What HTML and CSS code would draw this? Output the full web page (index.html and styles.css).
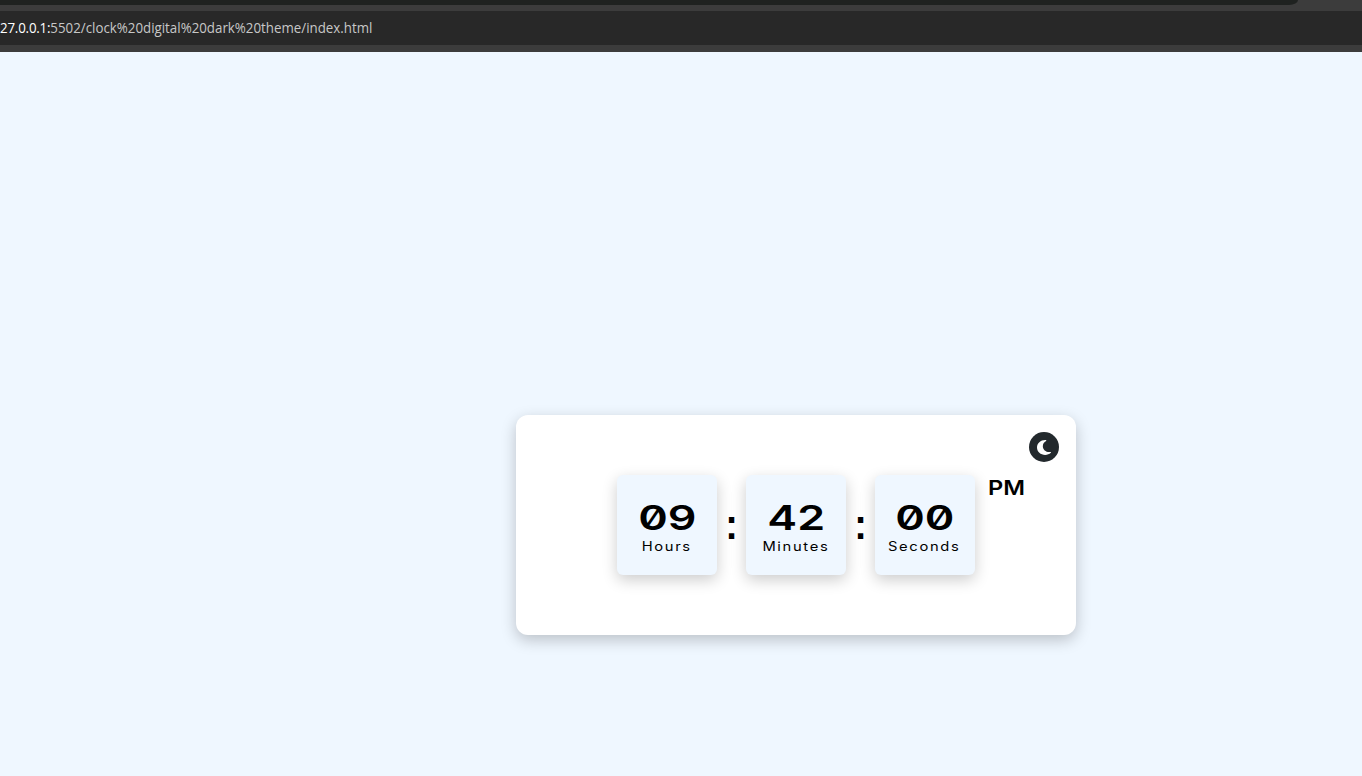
FILE: index.html
```html
<!DOCTYPE html>
<html lang="en">
<head>
<meta charset="utf-8">
<title>Digital Clock</title>
<link rel="stylesheet" href="styles.css">
</head>
<body>
<header class="browser">
  <div class="tabs"></div>
  <div class="address"><span class="url"><span class="host">27.0.0.1:</span>5502/clock%20digital%20dark%20theme/index.html</span></div>
</header>
<main class="page">
  <section class="card">
    <div class="clock">
      <div class="tile"><span class="num">09</span><span class="label">Hours</span></div>
      <span class="colon">:</span>
      <div class="tile"><span class="num">42</span><span class="label">Minutes</span></div>
      <span class="colon">:</span>
      <div class="tile"><span class="num">00</span><span class="label">Seconds</span></div>
      <span class="ampm">PM</span>
    </div>
    <button class="toggle" aria-label="Dark mode">
      <svg width="14" height="17" viewBox="0 0 384 512" preserveAspectRatio="none"><path fill="#fff" d="M223.500 32C100 32 0 132.300 0 256S100 480 223.500 480c60.600 0 115.500-24.200 155.800-63.400c5-4.900 6.300-12.500 3.100-18.700s-10.100-9.700-17-8.500c-9.800 1.700-19.800 2.600-30.100 2.600c-96.900 0-175.500-78.800-175.500-176c0-65.800 36-123.100 89.300-153.300c6.100-3.500 9.200-10.500 7.700-17.300s-7.300-11.900-14.300-12.500c-6.300-.5-12.600-.8-19-.8z"/></svg>
    </button>
  </section>
</main>
</body>
</html>
```
FILE: styles.css
```css
* { margin: 0; padding: 0; box-sizing: border-box; }
body { width: 1362px; height: 776px; overflow: hidden; background: #eff7ff; font-family: Inter, "DejaVu Sans", sans-serif; color: #000; }
.browser { height: 52px; background: #3c3c3c; display: flex; flex-direction: column; }
.tabs { width: 1298px; height: 5px; margin-bottom: 6px; background: #1f2220; border-bottom-right-radius: 9px 5px; }
.address { height: 34px; background: #282828; display: flex; align-items: center; }
.url { font: 14px/20px "Open Sans", sans-serif; color: #c7c7c7; white-space: nowrap; transform: scaleX(.951); transform-origin: left; }
.host { color: #fff; letter-spacing: -.2px; }
.page { height: 724px; padding: 363px 0 0 516px; }
.card { position: relative; width: 560px; height: 220px; background: #fff; border-radius: 12px; box-shadow: 0 5px 15px rgba(0,0,0,.22); padding: 60px 0 0 101px; }
.clock { display: flex; align-items: flex-start; }
.tile { width: 100px; height: 100px; border-radius: 6px; background: #eff7ff; box-shadow: 0 5px 15px rgba(0,0,0,.2); display: flex; flex-direction: column; align-items: center; padding-top: 25px; }
.num { font-size: 34.5px; line-height: 36px; font-weight: 600; font-feature-settings: "zero" 1; transform: scaleX(1.3); }
.label { font-size: 12.5px; line-height: 16px; font-weight: 400; letter-spacing: 1.4px; margin-top: 3px; white-space: nowrap; transform: translateX(-.5px) scaleX(1.18); }
.colon { width: 29px; height: 100px; text-align: center; font: 700 42px/100px "Liberation Sans", sans-serif; transform: scaleX(.9); }
.ampm { font-size: 20px; line-height: 26px; font-weight: 600; margin-left: 13px; transform: scaleX(1.18); transform-origin: left; }
.toggle { position: absolute; top: 17px; right: 17px; width: 30px; height: 30px; border: 0; border-radius: 50%; background: #23292d; display: flex; align-items: center; justify-content: center; }
.toggle svg { display: block; }
```
